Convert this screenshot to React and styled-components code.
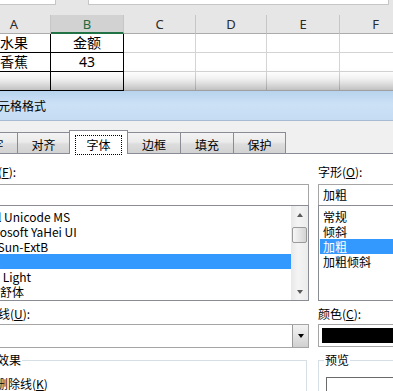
import React from 'react';
import styled, { createGlobalStyle } from 'styled-components';

const GlobalStyle = createGlobalStyle`
  html, body {
    margin: 0;
    padding: 0;
    background: #ffffff;
  }
  body {
    font-family: "Noto Sans CJK SC", "Noto Sans", sans-serif;
  }
`;

const Screen = styled.div`
  position: relative;
  width: 393px;
  height: 391px;
  overflow: hidden;
  background: #e6e6e6;
`;

/* ---------- spreadsheet ---------- */

const Sheet = styled.div`
  height: 91px;
  background: #e6e6e6;
`;

const FormulaBar = styled.div`
  display: flex;
  height: 5px;
`;

const FormulaBox = styled.div`
  box-sizing: border-box;
  width: ${(p) => p.$w}px;
  margin-left: ${(p) => p.$ml || 0}px;
  height: 5px;
  background: #fff;
  border: 1px solid #c6c6c6;
  border-top: none;
`;

const Grid = styled.div`
  display: grid;
  grid-template-columns: 73px 73px 72px 71px 73px 72px;
  margin-top: 10px;
  margin-left: -22px;
  width: 434px;
`;

const HeadCell = styled.div`
  box-sizing: border-box;
  height: 19px;
  border-right: 1px solid #c6c6c6;
  border-bottom: ${(p) => (p.$active ? '2px solid #217346' : '1px solid #ababab')};
  background: ${(p) => (p.$active ? '#d2d2d2' : '#e6e6e6')};
  color: ${(p) => (p.$active ? '#1d6a3f' : '#2b2b2b')};
  font: 13px/19px "Noto Sans", sans-serif;
  text-align: center;
`;

const Cell = styled.div`
  box-sizing: border-box;
  height: 19px;
  border-right: 1px solid ${(p) => (p.$boxed ? '#000' : '#d4d4d4')};
  border-bottom: 1px solid ${(p) => (p.$boxed ? '#000' : '#d4d4d4')};
  background: #fff;
  color: #000;
  font: 14px/18px "Noto Sans", "Noto Sans CJK SC", sans-serif;
  text-align: center;
`;

/* ---------- dialog ---------- */

const Dialog = styled.div`
  position: relative;
  z-index: 1;
  margin-left: -46px;
  width: 560px;
  height: 300px;
  background: #f0f0f0;
  box-shadow: 0 -4px 16px rgba(0, 0, 0, 0.38);
  font-size: 12px;
  color: #000;
`;

const TitleBar = styled.div`
  height: 29px;
  padding-left: 8px;
  line-height: 29px;
  background: linear-gradient(180deg, #b8d3ee 0%, #cce1f6 45%, #c5dcf3 100%);
  border-bottom: 1px solid #a7bcd2;
`;

const TabStrip = styled.div`
  display: flex;
  align-items: flex-end;
  height: 32px;
  padding-left: 11px;
`;

const Tab = styled.div`
  position: relative;
  box-sizing: border-box;
  display: flex;
  justify-content: center;
  align-items: flex-start;
  width: ${(p) => p.$w}px;
  height: ${(p) => (p.$active ? 24 : 21)}px;
  margin-left: ${(p) => (p.$first ? 0 : -1)}px;
  margin-bottom: ${(p) => (p.$active ? -1 : 0)}px;
  padding-top: ${(p) => (p.$active ? 4 : 5)}px;
  z-index: ${(p) => (p.$active ? 2 : 1)};
  border: 1px solid #898c95;
  border-bottom: none;
  background: ${(p) =>
    p.$active ? '#ffffff' : 'linear-gradient(180deg, #f3f3f3 0%, #ebebeb 45%, #dddddd 55%, #d2d2d2 100%)'};
  line-height: 14px;
`;

const FocusRing = styled.span`
  padding: 1px 10px;
  line-height: 16px;
  border: 1px dotted #000;
`;

const Panel = styled.div`
  height: 240px;
  padding: 10px 0 0 20px;
  background: #fff;
  border-top: 1px solid #898c95;
`;

const Form = styled.div`
  display: grid;
  grid-template-columns: 335px 150px;
  column-gap: 9px;
  align-items: start;
`;

const Label = styled.div`
  height: 16px;
  line-height: 16px;
  margin: ${(p) => p.$m || '0'};
  white-space: nowrap;
`;

const Key = styled.span`
  text-decoration: underline;
`;

const Stack = styled.div`
  display: flex;
  flex-direction: column;
`;

const TextBox = styled.div`
  box-sizing: border-box;
  height: 22px;
  padding-left: ${(p) => p.$pad}px;
  border: 1px solid #a5a5a5;
  line-height: 20px;
  white-space: nowrap;
  overflow: hidden;
`;

const ListBox = styled.div`
  box-sizing: border-box;
  display: flex;
  height: 96px;
  margin-top: -1px;
  border: 1px solid #8a8d94;
  overflow: hidden;
`;

const Items = styled.div`
  flex: 1;
  padding: 3px 0 0 1px;
  overflow: hidden;
`;

const Item = styled.div`
  height: 15px;
  line-height: 15px;
  padding-left: ${(p) => p.$pad}px;
  white-space: nowrap;
  background: ${(p) => (p.$selected ? '#3399ff' : 'transparent')};
  color: ${(p) => (p.$selected ? '#fff' : '#000')};
`;

const ScrollBar = styled.div`
  display: flex;
  flex-direction: column;
  align-items: center;
  width: 17px;
  background: linear-gradient(90deg, #e8e8e8, #f4f4f4 40%, #ececec);
`;

const ArrowButton = styled.div`
  display: flex;
  align-items: center;
  justify-content: center;
  width: 17px;
  height: 17px;
  margin-top: ${(p) => (p.$down ? 'auto' : '0')};
`;

const Triangle = styled.span`
  width: 0;
  height: 0;
  border-left: 3.5px solid transparent;
  border-right: 3.5px solid transparent;
  border-${(p) => (p.$down ? 'top' : 'bottom')}: 4px solid ${(p) => p.$color || '#5a5a5a'};
`;

const Thumb = styled.div`
  box-sizing: border-box;
  width: 15px;
  height: 16px;
  margin-top: 4px;
  border: 1px solid #9a9a9a;
  border-radius: 2px;
  background: linear-gradient(90deg, #f6f6f6, #e6e6e6 50%, #d4d4d4);
`;

const Select = styled.div`
  box-sizing: border-box;
  display: flex;
  height: ${(p) => p.$h}px;
  border: 1px solid #a5a5a5;
  background: #fff;
`;

const Fill = styled.div`
  flex: 1;
`;

const DropButton = styled.div`
  display: flex;
  align-items: center;
  justify-content: center;
  width: 15px;
  border-left: 1px solid #9a9a9a;
  background: linear-gradient(180deg, #f3f3f3, #e3e3e3 50%, #d0d0d0);
`;

const Swatch = styled.div`
  flex: 1;
  margin: 3px 3px;
  background: #000;
`;

const Group = styled.fieldset`
  box-sizing: border-box;
  min-width: 0;
  height: 60px;
  margin: 4px ${(p) => p.$mr || 0}px 0 ${(p) => p.$ml || 0}px;
  padding: 0 0 0 ${(p) => p.$pl}px;
  border: 1px solid #d5dfe5;
`;

const Legend = styled.legend`
  padding: 0 1px;
  height: 16px;
  line-height: 16px;
`;

const CheckRow = styled.label`
  display: flex;
  align-items: center;
  gap: 4px;
  padding: 8px 0 0 ${(p) => p.$indent || 0}px;
  line-height: 16px;
`;

const CheckBox = styled.span`
  box-sizing: border-box;
  width: 13px;
  height: 13px;
  border: 1px solid #8f8f8f;
  background: linear-gradient(135deg, #dedede, #fbfbfb);
`;

const PreviewBox = styled.div`
  width: 160px;
  height: 40px;
  margin: 9px 0 0 2px;
  border: 1px solid #6a6a6a;
  background: #fff;
`;

/* ---------- overlays ---------- */

const Watermark = styled.div`
  position: absolute;
  left: 274px;
  top: 336px;
  color: rgba(150, 150, 150, 0.4);
  font-family: "Noto Sans", sans-serif;
  pointer-events: none;
`;

const MarkLine = styled.div`
  display: flex;
  align-items: flex-end;
  height: 26px;
`;

const MarkWord = styled.span`
  font-size: ${(p) => p.$size}px;
  font-weight: 700;
  line-height: 1;
`;

const MarkUrl = styled.div`
  margin-top: 3px;
  font-size: 11px;
  letter-spacing: 0.2px;
`;

const Annotation = styled.svg`
  position: absolute;
  left: 0;
  top: 0;
  pointer-events: none;
`;

const columns = ['A', 'B', 'C', 'D', 'E', 'F'];
const rows = [
  ['水果', '金额'],
  ['香蕉', '43'],
  ['', ''],
];
const tabs = [
  { label: '数字', w: 53 },
  { label: '对齐', w: 53 },
  { label: '字体', w: 59, active: true },
  { label: '边框', w: 54 },
  { label: '填充', w: 54 },
  { label: '保护', w: 53 },
];
const fonts = ['Arial Unicode MS', 'Microsoft YaHei UI', 'SimSun-ExtB', '等线', '等线 Light', '方正舒体'];
const styles = ['常规', '倾斜', '加粗', '加粗倾斜'];

function Paw() {
  return (
    <svg width="22" height="24" viewBox="0 0 22 24" style={{ marginBottom: 2 }}>
      <g fill="rgba(150,150,150,0.4)">
        <ellipse cx="5" cy="7" rx="2.6" ry="3.4" />
        <ellipse cx="11" cy="4" rx="2.6" ry="3.4" />
        <ellipse cx="17" cy="7" rx="2.6" ry="3.4" />
        <ellipse cx="3" cy="13" rx="2.2" ry="2.8" />
        <path d="M11 11c-4 0-8 6-8 9 0 3 3 3 8 2 5 1 8 1 8-2 0-3-4-9-8-9z" />
      </g>
    </svg>
  );
}

export default function App() {
  return (
    <Screen>
      <GlobalStyle />
      <Sheet>
        <FormulaBar>
          <FormulaBox $w={57} $ml={-1} />
          <FormulaBox $w={301} $ml={32} />
        </FormulaBar>
        <Grid>
          {columns.map((c) => (
            <HeadCell key={c} $active={c === 'B'}>
              {c}
            </HeadCell>
          ))}
          {rows.map((r, i) =>
            columns.map((c, j) => (
              <Cell key={`${i}-${c}`} $boxed={j < 2}>
                {r[j] || ''}
              </Cell>
            ))
          )}
        </Grid>
      </Sheet>

      <Dialog>
        <TitleBar>设置单元格格式</TitleBar>
        <TabStrip>
          {tabs.map((t, i) => (
            <Tab key={t.label} $w={t.w} $active={t.active} $first={i === 0}>
              {t.active ? <FocusRing>{t.label}</FocusRing> : t.label}
            </Tab>
          ))}
        </TabStrip>
        <Panel>
          <Form>
            <Label $m="0 0 4px">
              字体(<Key>F</Key>):
            </Label>
            <Label $m="0 0 4px">
              字形(<Key>O</Key>):
            </Label>

            <Stack>
              <TextBox $pad={1}>等线</TextBox>
              <ListBox>
                <Items>
                  {fonts.map((f) => (
                    <Item key={f} $pad={0} $selected={f === '等线'}>
                      {f}
                    </Item>
                  ))}
                </Items>
                <ScrollBar>
                  <ArrowButton>
                    <Triangle />
                  </ArrowButton>
                  <Thumb />
                  <ArrowButton $down>
                    <Triangle $down />
                  </ArrowButton>
                </ScrollBar>
              </ListBox>
            </Stack>
            <Stack>
              <TextBox $pad={4}>加粗</TextBox>
              <ListBox>
                <Items>
                  {styles.map((s) => (
                    <Item key={s} $pad={3} $selected={s === '加粗'}>
                      {s}
                    </Item>
                  ))}
                </Items>
              </ListBox>
            </Stack>

            <Label $m="5px 0 2px">
              下划线(<Key>U</Key>):
            </Label>
            <Label $m="5px 0 2px">
              颜色(<Key>C</Key>):
            </Label>

            <Select $h={24}>
              <Fill />
              <DropButton>
                <Triangle $down $color="#000" />
              </DropButton>
            </Select>
            <Select $h={23}>
              <Swatch />
            </Select>

            <Group $ml={-6} $mr={2} $pl={3}>
              <Legend>特殊效果</Legend>
              <CheckRow $indent={7}>
                <CheckBox />
                <span>
                  删除线(<Key>K</Key>)
                </span>
              </CheckRow>
            </Group>
            <Group $pl={5}>
              <Legend>预览</Legend>
              <PreviewBox />
            </Group>
          </Form>
        </Panel>
      </Dialog>

      <Watermark>
        <MarkLine>
          <MarkWord $size={19}>Bai</MarkWord>
          <Paw />
          <MarkWord $size={19}>du</MarkWord>
          <MarkWord $size={12}>经验</MarkWord>
        </MarkLine>
        <MarkUrl>jingyan.baidu.com</MarkUrl>
      </Watermark>

      <Annotation width="393" height="391" viewBox="0 0 393 391">
        <line x1="49.5" y1="193" x2="44" y2="163" stroke="#f01c1c" strokeWidth="1.6" />
        <polygon points="42,155 38,166 47,165" fill="#f01c1c" />
      </Annotation>
    </Screen>
  );
}
